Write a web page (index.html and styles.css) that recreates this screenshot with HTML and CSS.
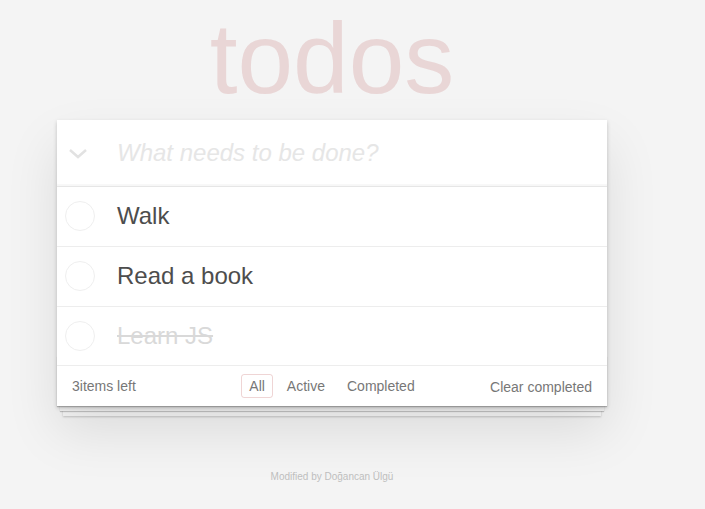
FILE: index.html
```html
<!DOCTYPE html>
<html lang="en">
<head>
<meta charset="utf-8">
<title>todos</title>
<link rel="stylesheet" href="styles.css">
</head>
<body>
<div class="page">
  <h1 class="title">todos</h1>
  <section class="todoapp">
    <header class="new-row">
      <span class="toggle-all">
        <svg width="20" height="12" viewBox="0 0 20 12"><polyline points="2,2 10,9 18,2" fill="none" stroke="#e2e2e2" stroke-width="2.5"/></svg>
      </span>
      <span class="new-todo">What needs to be done?</span>
    </header>
    <ul class="todo-list">
      <li class="todo"><span class="check"></span><span class="label">Walk</span></li>
      <li class="todo"><span class="check"></span><span class="label">Read a book</span></li>
      <li class="todo done"><span class="check"></span><span class="label">Learn JS</span></li>
    </ul>
    <footer class="footer">
      <span class="count">3items left</span>
      <ul class="filters">
        <li><a class="selected">All</a></li>
        <li><a>Active</a></li>
        <li><a>Completed</a></li>
      </ul>
      <span class="clear">Clear completed</span>
    </footer>
  </section>
  <p class="info">Modified by Doğancan Ülgü</p>
</div>
</body>
</html>
```

FILE: styles.css
```css
html, body { margin: 0; padding: 0; }
body {
  background: #f4f4f4;
  font-family: "Liberation Sans", Arial, sans-serif;
  color: #4d4d4d;
  padding-right: 41px;
  padding-top: 8px;
}
.page {
  max-width: 550px;
  margin: 0 auto;
}
.title {
  margin: 0;
  font-size: 100px;
  line-height: 100px;
  font-weight: normal;
  text-align: center;
  color: rgba(175, 47, 47, 0.15);
}
.todoapp {
  position: relative;
  margin-top: 12px;
  background: #fff;
  box-shadow: 0 2px 4px rgba(0,0,0,0.2), 0 25px 50px rgba(0,0,0,0.1);
}
.new-row {
  display: flex;
  align-items: center;
  height: 66px;
  border-bottom: 1px solid #e6e6e6;
  box-shadow: inset 0 -2px 1px rgba(0,0,0,0.03);
}
.toggle-all {
  width: 60px;
  display: flex;
  justify-content: center;
  margin-left: -9px;
  margin-right: 9px;
  padding-top: 2px;
}
.new-todo {
  font-size: 24px;
  font-style: italic;
  color: #e6e6e6;
}
.todo-list { list-style: none; margin: 0; padding: 0; }
.todo {
  display: flex;
  align-items: center;
  height: 58.8px;
  border-bottom: 1px solid #ededed;
  font-size: 24px;
}
.check {
  width: 28px;
  height: 28px;
  border: 1px solid #efefef;
  border-radius: 50%;
  margin-left: 8px;
  margin-right: 22px;
}
.label { color: #4d4d4d; }
.done .label { color: #d9d9d9; text-decoration: line-through; }
.footer {
  position: relative;
  display: flex;
  align-items: center;
  justify-content: space-between;
  height: 40px;
  padding: 0 15px;
  font-size: 14px;
  color: #777;
}
.footer::before {
  content: "";
  position: absolute;
  left: 0; right: 0; bottom: 0;
  height: 50px;
  overflow: hidden;
  box-shadow: 0 1px 1px rgba(0,0,0,0.2), 0 8px 0 -3px #f6f6f6, 0 9px 1px -3px rgba(0,0,0,0.2), 0 16px 0 -6px #f6f6f6, 0 17px 2px -6px rgba(0,0,0,0.2);
  z-index: -1;
}
.count { width: 150px; }
.filters {
  list-style: none;
  margin: 0;
  padding: 0;
  display: flex;
  position: absolute;
  left: 0; right: 0;
  justify-content: center;
}
.filters a {
  display: block;
  margin: 3px;
  padding: 3px 7px;
  border: 1px solid transparent;
  border-radius: 3px;
  color: inherit;
}
.filters a.selected { border-color: rgba(175,47,47,0.2); }
.clear { position: relative; top: 1px; }
.info {
  margin: 65px 0 0;
  text-align: center;
  font-size: 10px;
  color: #bfbfbf;
}
```
